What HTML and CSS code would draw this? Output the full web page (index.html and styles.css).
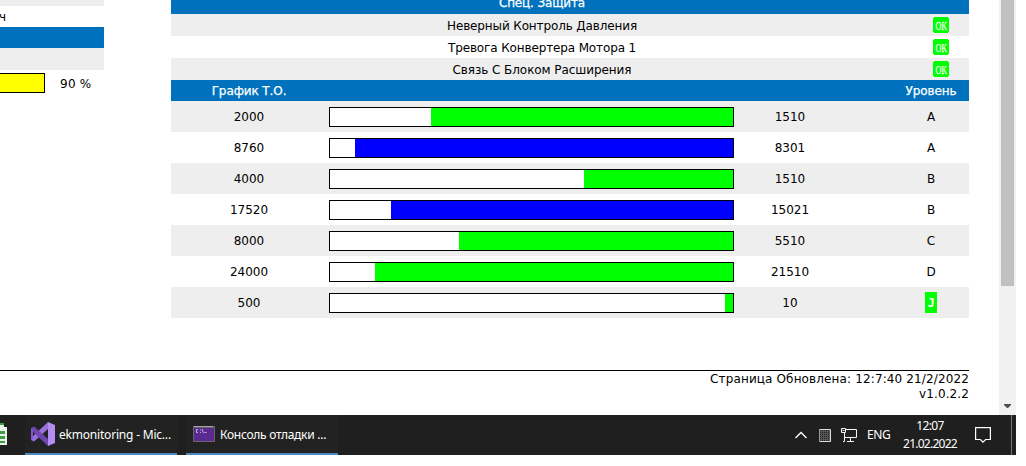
FILE: index.html
```
<!DOCTYPE html>
<html lang="ru">
<head>
<meta charset="utf-8">
<title>ekmonitoring</title>
<link rel="stylesheet" href="styles.css">
</head>
<body>
<div class="screen">
  <div class="browser">
    <main class="page">
      <div class="columns">
        <section class="side">
          <div class="side-row side-top"></div>
          <div class="side-row side-hours">ч</div>
          <div class="side-row side-head"></div>
          <div class="side-row side-gray"></div>
          <div class="side-row side-level"><div class="side-bar"></div><span>90 %</span></div>
        </section>
        <section class="content">
          <div class="alarm head first"><span class="cap-special">Спец. Защита</span></div>
          <div class="alarm odd"><span class="n1">Неверный Контроль Давления</span><svg class="ok" viewBox="0 0 16 16"><use href="#ok"/></svg></div>
          <div class="alarm"><span class="n2">Тревога Конвертера Мотора 1</span><svg class="ok" viewBox="0 0 16 16"><use href="#ok"/></svg></div>
          <div class="alarm odd"><span class="n3">Связь С Блоком Расширения</span><svg class="ok" viewBox="0 0 16 16"><use href="#ok"/></svg></div>
          <div class="service head"><span class="cap-plan">График Т.О.</span><span></span><span></span><span></span><span class="cap-level">Уровень</span></div>
          <div class="service odd"><span>2000</span><div class="bar"><div class="fill" style="width:302px"></div></div><span>1510</span><i></i><span>A</span></div>
          <div class="service"><span>8760</span><div class="bar"><div class="fill blue" style="width:378px"></div></div><span>8301</span><i></i><span>A</span></div>
          <div class="service odd"><span>4000</span><div class="bar"><div class="fill" style="width:149px"></div></div><span>1510</span><i></i><span>B</span></div>
          <div class="service"><span>17520</span><div class="bar"><div class="fill blue" style="width:342px"></div></div><span>15021</span><i></i><span>B</span></div>
          <div class="service odd"><span>8000</span><div class="bar"><div class="fill" style="width:274px"></div></div><span>5510</span><i></i><span>C</span></div>
          <div class="service"><span>24000</span><div class="bar"><div class="fill" style="width:358px"></div></div><span>21510</span><i></i><span>D</span></div>
          <div class="service odd"><span>500</span><div class="bar"><div class="fill" style="width:8px"></div></div><span>10</span><i></i><b class="due">J</b></div>
        </section>
      </div>
      <footer class="footer"><div class="updated">Страница Обновлена: 12:7:40 21/2/2022</div><div class="version">v1.0.2.2</div></footer>
    </main>
    <div class="scrollbar">
      <div class="thumb"></div>
      <svg class="arrow" viewBox="0 0 7 4"><path d="M0 0h7v1L4 4H3L0 1z" fill="#505050"/></svg>
    </div>
  </div>
  <div class="taskbar">
    <svg class="calc" viewBox="0 0 8 24"><path d="M0 1h4v4h3v18H0z" fill="#e9f3e5"/><path d="M0 1h4v2H0zM0 9h5v3H0zM0 14h5v3H0zM0 19h5v2H0z" fill="#3f9b46"/></svg>
    <div class="task vs">
      <svg class="vs-icon" viewBox="0 0 24 24"><path d="M17 7L3 19.500 0 18v-2L17 0z" fill="#9a70dc"/><path d="M0 6l3-1.500L17 17v7L0 8z" fill="#6f45b0"/><path d="M0 6l2 2v9l-2 1z" fill="#8257c4"/><path d="M17 0l7 3v18l-7 3z" fill="#b48cf0"/></svg>
      <span class="t1">ekmonitoring - Mic...</span>
    </div>
    <div class="task console">
      <svg class="con-icon" viewBox="0 0 22 16"><path d="M0 0h22v16H0z" fill="#666269"/><path d="M1 2h20v13H1z" fill="#5b2a91"/><path d="M1 .5h19" stroke="#a5a2a8"/><path d="M5 3.500H3.500v3H5M7.500 3.500v1M7.500 6v1M9 3l1.500 4M11.500 6.500h2" fill="none" stroke="#d9c9ec" stroke-width=".8"/></svg>
      <span class="t2">Консоль отладки ...</span>
    </div>
    <div class="tray">
      <svg class="chev" viewBox="0 0 12 8"><path d="M.5 7L6 1.500 11.500 7" fill="none" stroke="#fff" stroke-width="1.300"/></svg>
      <svg class="chip" viewBox="0 0 12 13"><defs><pattern id="dots" width="2" height="2" patternUnits="userSpaceOnUse"><path d="M0 0h2v2H0z" fill="#555"/><path d="M1 1h1v1H1z" fill="#222"/></pattern></defs><path d="M0 0h12v13H0z" fill="url(#dots)"/><path d="M0 .5h11.500v12H0" fill="none" stroke="#ddd"/><path d="M.5 0v13" stroke="#999"/></svg>
      <svg class="net" viewBox="0 0 17 14"><path d="M5 1.500h10.500v8H3.500V5M9.500 10v3M6 13.500h7M.5.5h4v4h-4zM3.500 5v8.500H2" fill="none" stroke="#f4f4f4"/><path d="M1.500 2.500h2" stroke="#f4f4f4"/></svg>
      <span class="lang">ENG</span>
      <div class="clock"><span class="time">12:07</span><span class="date">21.02.2022</span></div>
      <svg class="note" viewBox="0 0 16 16"><path d="M.6.600h14.800v11.900h-4.800L8 15.100l-2.600-2.600H.6z" fill="none" stroke="#fff" stroke-width="1.200"/></svg>
      <div class="peek"></div>
    </div>
  </div>
</div>
<svg width="0" height="0" class="defs"><defs><g id="ok"><path d="M1 0h14v1h1v14h-1v1H1v-1H0V1h1z" fill="#0f0"/><text x="2.500" y="12.500" textLength="11.500" lengthAdjust="spacingAndGlyphs" class="ok-text">OK</text></g></defs></svg>
</body>
</html>
```
FILE: styles.css
```
* { box-sizing: border-box; }
body { margin: 0; background: #fff; overflow: hidden; font: 12px/15px "DejaVu Sans", Verdana, sans-serif; color: #000; }
svg { display: block; flex: none; }
.defs { position: absolute; }
.screen { width: 1016px; height: 455px; overflow: hidden; }
.browser { display: flex; height: 415px; }
.page { width: 999px; }
.columns { display: flex; gap: 67px; height: 370px; }
.side { width: 104px; }
.side-row { height: 22px; }
.side-row.side-top { height: 6px; background: #eee; }
.side-row.side-hours { height: 21px; padding-top: 4px; margin-left: -1px; }
.side-row.side-head { height: 21px; background: #0072bd; }
.side-gray { background: #eee; }
.side-level { display: flex; gap: 15px; padding-top: 3px; white-space: nowrap; }
.side-level span { padding-top: 4px; letter-spacing: .25px; }
.side-bar { width: 45px; height: 20px; flex: none; background: #ff0; border: 1px solid #000; border-left: 0; }
.content { width: 798px; text-align: center; }
.alarm { display: grid; grid-template-columns: 742px 56px; height: 22px; align-items: center; justify-items: center; }
.alarm span { padding-top: 3px; }
.n1, .n2 { letter-spacing: -.13px; }
.n3 { letter-spacing: -.07px; }
.odd { background: #eee; }
.head { background: #0072bd; color: #fff; -webkit-text-stroke: .25px #fff; }
.alarm.first { height: 14px; grid-template-rows: 14px; align-items: end; overflow: hidden; }
.alarm.first span { padding: 0 0 3px; }
.cap-special { letter-spacing: -.15px; }
.cap-plan, .cap-level { letter-spacing: -.1px; }
.ok { width: 16px; height: 16px; }
.ok-text { font: 13px "Liberation Serif", serif; fill: #fff; stroke: #fff; stroke-width: .25px; }
.service { display: grid; grid-template-columns: 156px 409px 108px 49px 76px; height: 31px; align-items: center; }
.service span { padding-top: 1px; }
.service.head { height: 21px; }
.bar { display: flex; justify-content: flex-end; width: 405px; height: 20px; margin: 1px 2px 0; border: 1px solid #000; background: #fff; }
.fill { background: #0f0; }
.fill.blue { background: #00f; }
.due { justify-self: center; width: 12px; height: 21px; padding-top: 1px; background: #0f0; color: #fff; font: bold 12px/20px "DejaVu Sans Mono", monospace; }
.footer { width: 969px; border-top: 1px solid #000; text-align: right; padding-top: 1px; }
.updated { letter-spacing: .13px; }
.version { letter-spacing: .1px; }
.scrollbar { display: flex; flex-direction: column; justify-content: space-between; align-items: center; width: 17px; background: #f1f1f1; padding-bottom: 7px; }
.thumb { width: 13px; height: 286px; background: #c1c1c1; }
.arrow { width: 7px; height: 4px; }
.taskbar { display: flex; height: 40px; background: #1f1f1f; color: #fff; font: 12px/18px "Noto Sans", sans-serif; white-space: nowrap; }
.calc { width: 8px; height: 24px; margin-top: 7px; }
.task { display: flex; align-items: center; width: 152px; height: 40px; border-bottom: 2px solid #4a87bd; background: #222; }
.vs { margin-left: 17px; padding-left: 6px; gap: 4px; }
.vs-icon { width: 24px; height: 24px; }
.t1 { letter-spacing: -.2px; padding-top: 2px; }
.t2 { letter-spacing: -.27px; padding-top: 2px; }
.console { margin-left: 9px; padding-left: 7px; gap: 5px; }
.con-icon { width: 22px; height: 16px; }
.tray { display: flex; align-items: center; margin-left: auto; }
.chev { width: 12px; height: 8px; margin-right: 12px; }
.chip { width: 12px; height: 13px; margin-right: 10px; }
.net { width: 17px; height: 14px; margin-right: 9px; }
.lang { width: 24px; margin-right: 11px; letter-spacing: -.4px; }
.clock { display: flex; flex-direction: column; align-items: center; width: 56px; margin-right: 17px; letter-spacing: -.75px; }
.time { letter-spacing: -.6px; }
.note { width: 16px; height: 16px; margin-right: 20px; }
.peek { width: 1px; height: 40px; background: #777; margin-right: 4px; }
```
